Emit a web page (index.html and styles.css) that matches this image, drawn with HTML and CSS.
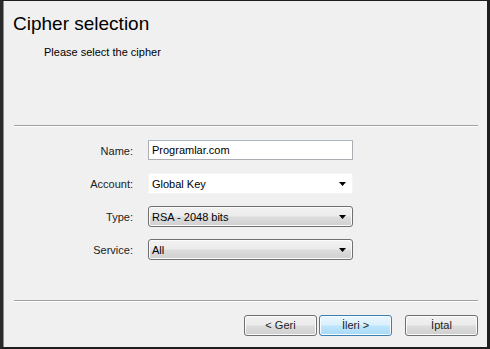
FILE: index.html
```html
<!DOCTYPE html>
<html>
<head>
<meta charset="utf-8">
<link rel="stylesheet" href="styles.css">
</head>
<body>
<div class="window">
  <div class="header">
    <div class="title">Cipher selection</div>
    <div class="subtitle">Please select the cipher</div>
  </div>
  <div class="sep"></div>
  <div class="form">
    <label class="label">Name:</label>
    <div class="textbox">Programlar.com</div>
    <label class="label">Account:</label>
    <div class="combo combo-flat"><span>Global Key</span><svg class="arrow" width="7" height="4" viewBox="0 0 7 4"><path d="M0 0H7L3.5 4Z" fill="#000"/></svg></div>
    <label class="label">Type:</label>
    <div class="combo combo-btn"><span>RSA - 2048 bits</span><svg class="arrow" width="7" height="4" viewBox="0 0 7 4"><path d="M0 0H7L3.5 4Z" fill="#000"/></svg></div>
    <label class="label">Service:</label>
    <div class="combo combo-btn"><span>All</span><svg class="arrow" width="7" height="4" viewBox="0 0 7 4"><path d="M0 0H7L3.5 4Z" fill="#000"/></svg></div>
  </div>
  <div class="sep"></div>
  <div class="footer">
    <div class="btn">&lt; Geri</div>
    <div class="btn btn-default">İleri &gt;</div>
    <div class="btn btn-cancel">İptal</div>
  </div>
</div>
</body>
</html>
```
FILE: styles.css
```css
html, body {
  margin: 0;
  padding: 0;
  background: #f0f0f0;
}
body {
  font-family: "Liberation Sans", Arial, sans-serif;
  font-size: 11px;
  color: #000;
}
.window {
  box-sizing: border-box;
  width: 490px;
  height: 349px;
  background: #f0f0f0;
  border-top: 1px solid #1e1e1e;
  border-left: 3px solid #2a2a2a;
  border-right: 3px solid #1e1e1e;
  border-bottom: 2px solid #1e1e1e;
  box-shadow: inset 1px 0 0 #8c8c8c;
  display: flex;
  flex-direction: column;
}
.header {
  height: 124px;
  box-sizing: border-box;
  padding: 12px 0 0 10px;
}
.title {
  font-size: 19px;
  line-height: 22px;
  color: #000;
}
.subtitle {
  margin: 11px 0 0 31px;
  line-height: 13px;
}
.sep {
  height: 1px;
  margin: 0 9px 0 11px;
  border-top: 1px solid #a0a0a0;
  background: #fff;
}
.form {
  flex: 1;
  display: grid;
  grid-template-columns: 130px 205px;
  grid-auto-rows: 21px;
  column-gap: 15px;
  row-gap: 12px;
  align-content: start;
  padding-top: 13px;
}
.label {
  text-align: right;
  align-self: center;
  color: #222;
}
.textbox {
  box-sizing: border-box;
  height: 20px;
  background: #fff;
  border: 1px solid #abadb3;
  border-top-color: #abb6c4;
  border-radius: 1px;
  padding: 0 0 0 3px;
  line-height: 18px;
}
.combo {
  box-sizing: border-box;
  display: flex;
  align-items: center;
  justify-content: space-between;
  padding: 0 6px 0 3px;
}
.combo-flat {
  background: #fff;
  border: 1px solid #f4f4f4;
}
.combo-btn {
  border: 1px solid #707070;
  border-radius: 3px;
  background: linear-gradient(#f2f2f2 0%, #ebebeb 48%, #dddddd 52%, #cfcfcf 100%);
  box-shadow: inset 0 0 0 1px #fbfbfb;
}
.arrow {
  display: block;
  margin-top: 1px;
}
.footer {
  display: flex;
  justify-content: flex-end;
  padding: 13px 9px 11px 0;
}
.btn {
  box-sizing: border-box;
  width: 73px;
  height: 21px;
  border: 1px solid #707070;
  border-radius: 3px;
  background: linear-gradient(#f2f2f2 0%, #ebebeb 48%, #dddddd 52%, #cfcfcf 100%);
  box-shadow: inset 0 0 0 1px #fbfbfb;
  text-align: center;
  line-height: 19px;
  color: #222;
}
.btn-default {
  margin-left: 2px;
  border-color: #3c7fb1;
  background: linear-gradient(#eaf6fd 0%, #d9f0fc 48%, #bee6fd 52%, #a7d9f5 100%);
  box-shadow: inset 0 0 0 1px #f6fbfe;
}
.btn-cancel {
  margin-left: 13px;
}
```
